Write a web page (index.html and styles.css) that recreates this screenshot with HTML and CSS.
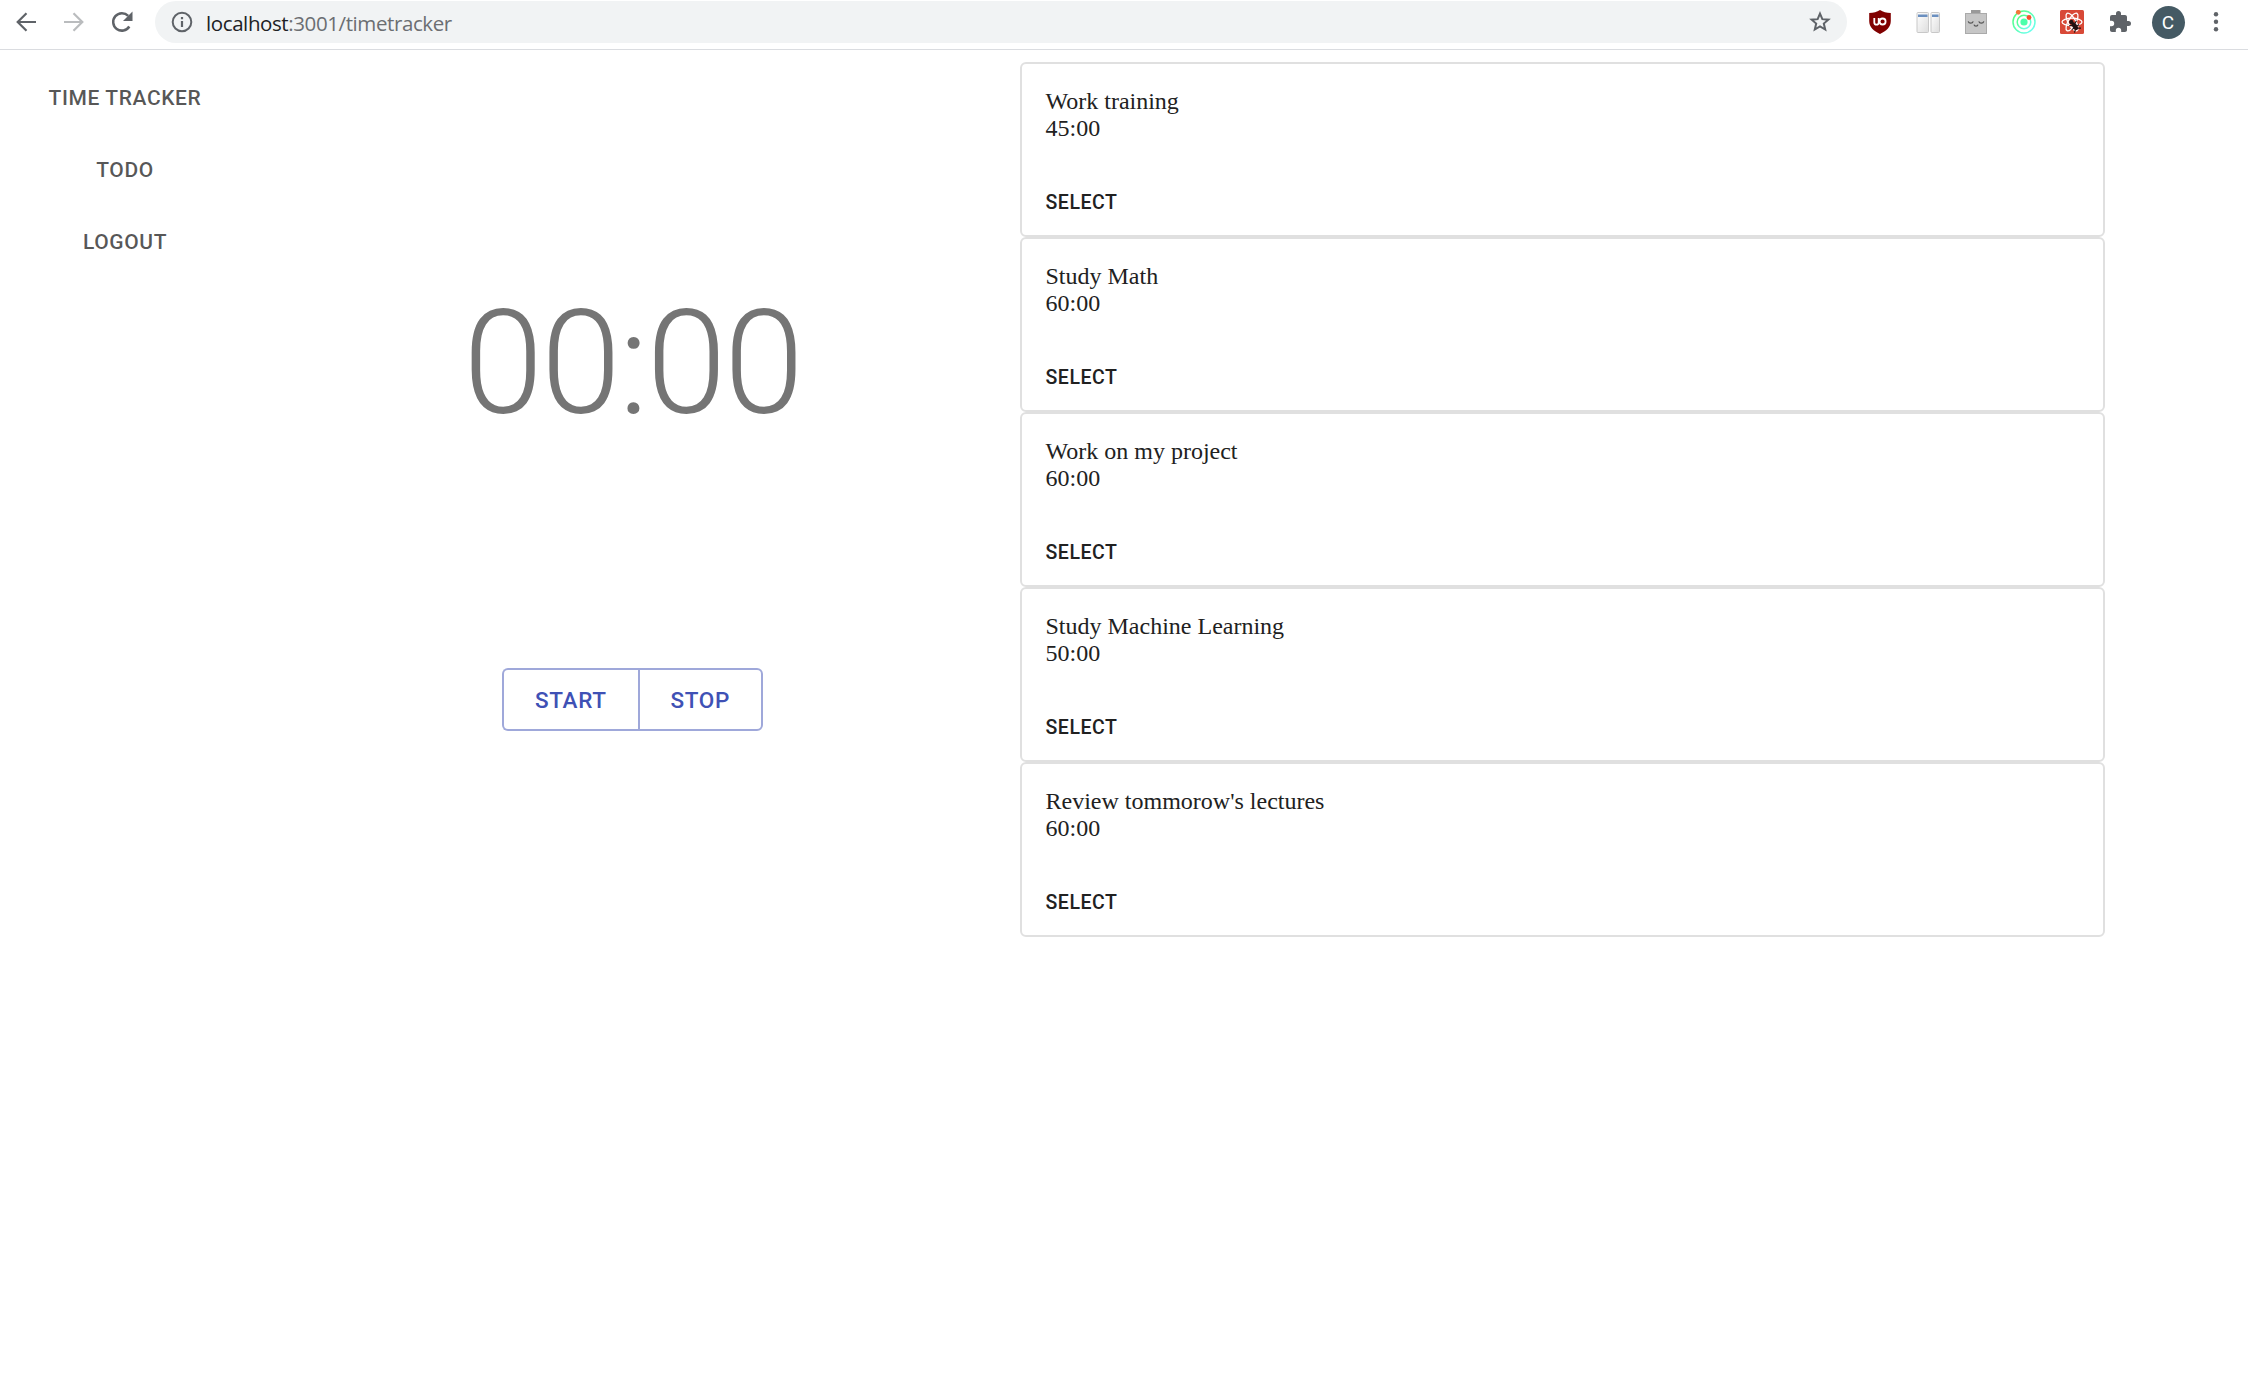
FILE: index.html
```html
<!DOCTYPE html>
<html lang="en">
<head>
<meta charset="utf-8">
<title>Time Tracker</title>
<link rel="stylesheet" href="styles.css">
</head>
<body>
<header class="toolbar">
  <div class="nav-icons">
    <svg width="24" height="24" viewBox="0 0 24 24" fill="none" stroke="#5f6368" stroke-width="2.2"><path d="M22 12H4M12.500 3.200 3.700 12l8.800 8.800"/></svg>
    <svg width="24" height="24" viewBox="0 0 24 24" fill="none" stroke="#babcbe" stroke-width="2.200"><path d="M2 12h18M11.500 3.200 20.300 12l-8.800 8.800"/></svg>
    <svg width="24" height="24" viewBox="0 0 24 24"><path d="M19.300 16.500A8.700 8.700 0 1 1 18.200 5.900" fill="none" stroke="#5f6368" stroke-width="2.500"/><path d="M22.500 1.500v9.500H13z" fill="#5f6368"/></svg>
  </div>
  <div class="address">
    <svg width="22" height="22" viewBox="0 0 22 22"><circle cx="11" cy="11" r="9.300" fill="none" stroke="#5f6368" stroke-width="2"/><path d="M9.900 10h2.200v6H9.900zM9.900 6h2.200v2.200H9.900z" fill="#5f6368"/></svg>
    <span class="url">localhost<span class="url-path">:3001/timetracker</span></span>
    <svg class="star" width="24" height="24" viewBox="0 0 24 24" fill="none" stroke="#5f6368" stroke-width="2"><path d="m12 3.600 2.350 5.550 6.050.5-4.600 3.950 1.400 5.900L12 16.350 6.800 19.500l1.400-5.900L3.600 9.650l6.050-.5z"/></svg>
  </div>
  <div class="extensions">
    <svg width="24" height="24" viewBox="0 0 24 24"><path d="M12 0c3 2 6.500 3 10.800 3v8c0 6-4.500 10-10.800 13C5.700 21 1.200 17 1.200 11V3C5.500 3 9 2 12 0z" fill="#800000"/><path d="M6.300 8v4.500a2.200 2.200 0 0 0 4.400 0V8" fill="none" stroke="#fff" stroke-width="1.800"/><circle cx="14.600" cy="11.500" r="3" fill="none" stroke="#fff" stroke-width="1.800"/></svg>
    <svg width="24" height="24" viewBox="0 0 24 24"><defs><linearGradient id="pane" x2="1" y2="1"><stop stop-color="#fff"/><stop offset="1" stop-color="#ddd"/></linearGradient></defs><g stroke="#c8c8c8" fill="url(#pane)"><rect x="1" y="2.500" width="11.500" height="20" rx="1"/><rect x="15" y="2.500" width="8.500" height="20" rx="1"/></g><path d="M2 4.500h9.500V7H2zM16 4.500h6.500V7H16z" fill="#6a8fc0"/></svg>
    <svg width="24" height="24" viewBox="0 0 24 24"><path d="M7 0h9.500v4H7z" fill="#999"/><rect x="1.500" y="3.500" width="21" height="20" fill="#c6c6c6" stroke="#aaa"/><path d="M4.200 11.300c.6 2.300 4.400 2.300 5 0M14.800 11.300c.6 2.300 4.400 2.300 5 0M10 14.700c.4 1.900 3.600 1.900 4 0" fill="none" stroke="#555" stroke-width="1.200"/></svg>
    <svg width="24" height="24" viewBox="0 0 24 24"><defs><linearGradient id="orbit" x2="1" y2="1"><stop stop-color="#4cff70"/><stop offset="1" stop-color="#70ffff"/></linearGradient></defs><g fill="none" stroke="url(#orbit)" stroke-width="1.500"><circle cx="12" cy="12" r="11"/><circle cx="12" cy="12" r="6.800"/></g><circle cx="12" cy="12" r="3.600" fill="#4cffab"/><circle cx="6.300" cy="2.300" r="2.400" fill="#f0783a"/><circle cx="17" cy="7.500" r="2.400" fill="#f4502c"/></svg>
    <svg width="24" height="24" viewBox="0 0 24 24"><rect width="24" height="24" rx="1.500" fill="#d84937"/><g fill="none" stroke="#fff" stroke-width="1.300"><ellipse cx="12" cy="12" rx="10" ry="3.800"/><ellipse cx="12" cy="12" rx="10" ry="3.800" transform="rotate(60 12 12)"/><ellipse cx="12" cy="12" rx="10" ry="3.800" transform="rotate(120 12 12)"/></g><g transform="rotate(-35 14 15)"><ellipse cx="14" cy="16.500" rx="2.300" ry="4.300" fill="#211"/><circle cx="13.500" cy="11" r="2.200" fill="#211"/><path d="m9.500 13 4.500 2 4.500-2M9.500 17.500h9M10 21.500l4-3 4 3" fill="none" stroke="#211" stroke-width="1.200"/></g></svg>
    <svg width="24" height="24" viewBox="0 0 24 24"><path d="M20.500 11H19V7c0-1.100-.9-2-2-2h-4V3.500a2.500 2.500 0 0 0-5 0V5H4a2 2 0 0 0-2 2v3.800h1.500a2.700 2.700 0 0 1 0 5.400H2V20c0 1.100.9 2 2 2h3.800v-1.500a2.700 2.700 0 0 1 5.400 0V22H17c1.100 0 2-.9 2-2v-4h1.500a2.500 2.500 0 0 0 0-5z" fill="#5f6368"/></svg>
    <span class="avatar">C</span>
    <svg width="24" height="24" viewBox="0 0 24 24" fill="#5f6368"><circle cx="12" cy="4.300" r="2.200"/><circle cx="12" cy="11.800" r="2.200"/><circle cx="12" cy="19.300" r="2.200"/></svg>
  </div>
</header>
<div class="app">
  <nav class="tabs">
    <a class="tab">TIME TRACKER</a>
    <a class="tab">TODO</a>
    <a class="tab">LOGOUT</a>
  </nav>
  <section class="timer">
    <h1 class="clock">00:00</h1>
    <div class="controls"><button class="control">START</button><button class="control">STOP</button></div>
  </section>
  <main class="tasks">
    <article class="card"><div>Work training</div><div>45:00</div><button class="select">SELECT</button></article>
    <article class="card"><div>Study Math</div><div>60:00</div><button class="select">SELECT</button></article>
    <article class="card"><div>Work on my project</div><div>60:00</div><button class="select">SELECT</button></article>
    <article class="card"><div>Study Machine Learning</div><div>50:00</div><button class="select">SELECT</button></article>
    <article class="card"><div>Review tommorow's lectures</div><div>60:00</div><button class="select">SELECT</button></article>
  </main>
</div>
</body>
</html>
```
FILE: styles.css
```css
* { box-sizing: border-box; }
body { margin: 0; background: #fff; }
svg { display: block; flex: none; }
button { margin: 0; background: none; font-family: Roboto, sans-serif; font-weight: 500; letter-spacing: 0.02857em; }

.toolbar { display: flex; height: 50px; padding-top: 1px; border-bottom: 1px solid #dadce0; }
.nav-icons { display: flex; align-items: center; gap: 24px; width: 155px; height: 42px; padding-left: 14px; }
.address { display: flex; align-items: center; width: 1692px; height: 42px; padding: 0 15px 0 16px; border-radius: 21px; background: #f1f3f4; }
.url { margin-left: 13px; padding-top: 1px; font: 20.500px/42px "Open Sans", sans-serif; letter-spacing: -0.400px; color: #202124; }
.url-path { color: #6b6e72; }
.star { margin-left: auto; }
.extensions { display: flex; align-items: center; height: 42px; padding-left: 21px; gap: 24px; }
.avatar { width: 33px; height: 33px; margin: 0 -4.500px; border-radius: 50%; background: #455a64; color: #fff; font: 19px/33px Roboto, sans-serif; text-align: center; }

.app { display: grid; grid-template-columns: 250px 765px 1090px; padding-top: 12px; }
.tabs { display: flex; flex-direction: column; }
.tab { height: 72px; font: 500 21px/72px Roboto, sans-serif; letter-spacing: 0.02857em; text-align: center; color: rgba(0, 0, 0, 0.67); }

.timer { display: flex; flex-direction: column; align-items: center; padding-top: 218px; }
.clock { margin: 0; font: 300 144px/168px Roboto, sans-serif; letter-spacing: -0.01562em; color: #757575; }
.controls { display: flex; margin-top: 220px; }
.control { height: 63px; padding: 0 31px; border: 2px solid #9fa8da; border-radius: 6px; font-size: 22.500px; color: #3f51b5; }
.control:first-child { border-right: 0; border-radius: 6px 0 0 6px; }
.control:last-child { border-radius: 0 6px 6px 0; }

.tasks { display: flex; flex-direction: column; padding-left: 5px; }
.card { height: 175px; padding: 24px 23.500px; border: 2px solid #e0e0e0; border-radius: 6px; font: 24px/27px "Liberation Serif", serif; color: #212121; }
.select { display: block; margin-top: 38px; padding: 6px 0; border: 0; font-size: 19.500px; line-height: 34px; color: #212121; }
```
